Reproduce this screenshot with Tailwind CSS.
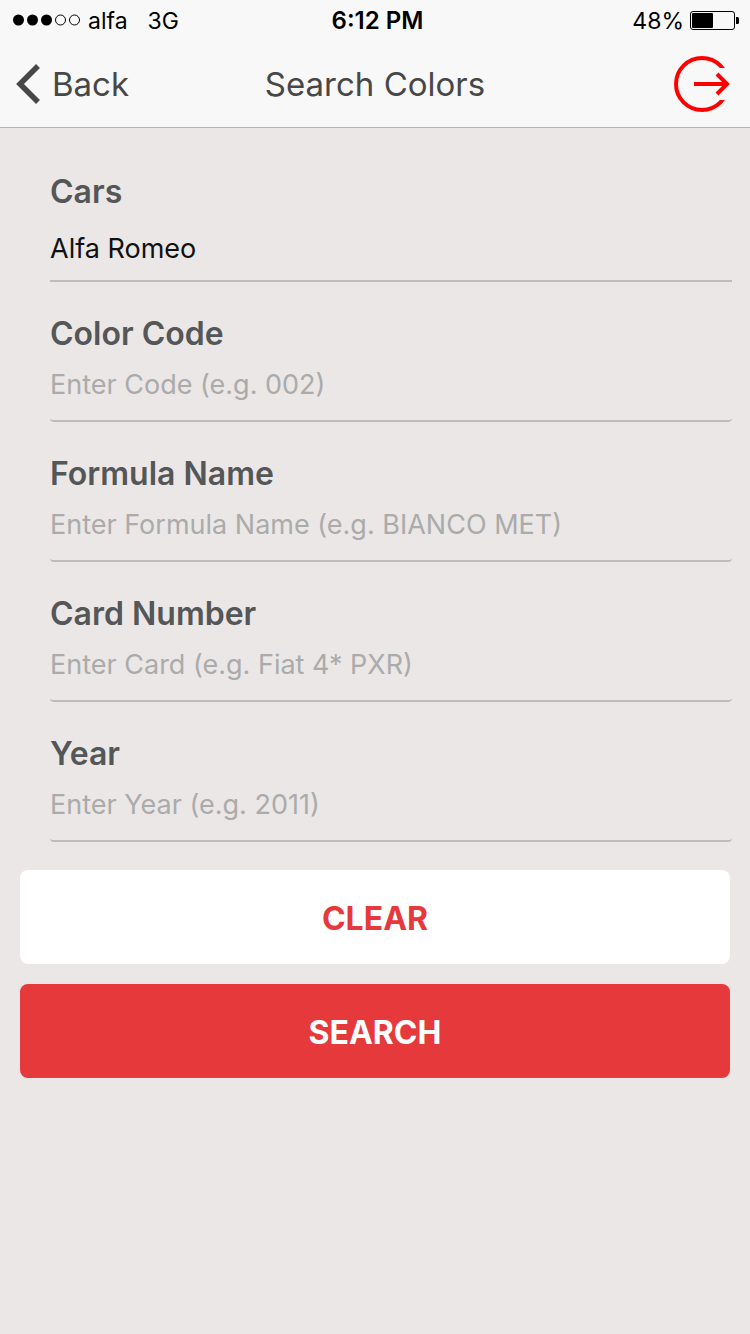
<!DOCTYPE html>
<html lang="en">
<head>
<meta charset="utf-8">
<meta name="viewport" content="width=device-width, initial-scale=1">
<title>Search Colors</title>
<script src="https://cdn.jsdelivr.net/npm/@tailwindcss/browser@4"></script>
</head>
<body class="min-h-screen bg-[#eae7e6] font-['Inter','Liberation_Sans',sans-serif] text-[#545657]">
<header class="border-b border-[#b2b2b2] bg-[#f8f8f8]">
  <div class="grid h-10 grid-cols-[1fr_auto_1fr] items-center pl-3 pr-[11px] text-[23px] text-black">
    <div class="flex items-center">
      <svg class="mr-2 h-3 w-[68px]" viewBox="0 0 68 12" aria-label="Signal strength 3 of 5">
        <circle cx="6.5" cy="6" r="5.5"/><circle cx="20.5" cy="6" r="5.5"/><circle cx="34.5" cy="6" r="5.5"/>
        <circle cx="48.5" cy="6" r="5" fill="none" stroke="black"/><circle cx="62.5" cy="6" r="5" fill="none" stroke="black"/>
      </svg>
      <span class="pt-0.5">alfa</span><span class="ml-5 pt-0.5">3G</span>
    </div>
    <span class="pl-1 pt-0.5 text-[24px] font-semibold">6:12 PM</span>
    <div class="flex items-center justify-end gap-1.5">
      <span class="pt-0.5">48%</span>
      <svg class="h-5 w-[49px]" viewBox="0 0 49 20" aria-label="Battery">
        <rect x=".5" y="1.5" width="44" height="18" rx="2.5" fill="none" stroke="black"/>
        <rect x="2" y="3" width="21" height="15" rx="1"/>
        <path d="M46 7h1.500q1.500 0 1.500 1.500v4q0 1.500-1.500 1.500H46z"/>
      </svg>
    </div>
  </div>
  <nav class="grid h-[87px] grid-cols-[1fr_auto_1fr] items-center text-[33px] text-[#474747]">
    <button type="button" class="ml-4 flex items-center gap-3 justify-self-start">
      <svg class="h-10 w-6" viewBox="0 0 24 40" fill="none" stroke="currentColor" stroke-width="5.500" aria-hidden="true"><path d="M22 2 4 20l18 18"/></svg>
      <span class="pt-0.5">Back</span>
    </button>
    <h1 class="pt-0.5">Search Colors</h1>
    <button type="button" class="mr-5 justify-self-end" aria-label="Log out">
      <svg class="h-14 w-14" viewBox="0 0 56 56" fill="none" stroke="#ff0000" stroke-width="4" aria-hidden="true">
        <clipPath id="gap"><path d="M0 0h56v12H40v32h16v12H0z"/></clipPath>
        <circle cx="28" cy="28" r="26" clip-path="url(#gap)"/>
        <path d="M20 28h33M43 18l10 10-10 10"/>
      </svg>
    </button>
  </nav>
</header>
<main class="pt-[42px]">
  <form>
    <div class="flex flex-col gap-[30px] pl-[50px] pr-[18px]">
      <div class="flex flex-col">
        <label for="cars" class="pt-px text-[32px] leading-[41px] font-semibold">Cars</label>
        <select id="cars" class="h-[70px] appearance-none border-b-2 border-[#bebbba] pt-1.5 text-[27px] text-[#111111] outline-none"><option>Alfa Romeo</option></select>
      </div>
      <div class="flex flex-col">
        <label for="code" class="pt-px text-[32px] leading-[41px] font-semibold">Color Code</label>
        <input id="code" type="text" placeholder="Enter Code (e.g. 002)" class="h-[68px] rounded-sm border-b-2 border-[#bebbba] pb-1.5 text-[27px] text-[#111111] outline-none placeholder:text-[#ababab]">
      </div>
      <div class="flex flex-col">
        <label for="formula" class="pt-px text-[32px] leading-[41px] font-semibold">Formula Name</label>
        <input id="formula" type="text" placeholder="Enter Formula Name (e.g. BIANCO MET)" class="h-[68px] rounded-sm border-b-2 border-[#bebbba] pb-1.5 text-[27px] text-[#111111] outline-none placeholder:text-[#ababab]">
      </div>
      <div class="flex flex-col">
        <label for="card" class="pt-px text-[32px] leading-[41px] font-semibold">Card Number</label>
        <input id="card" type="text" placeholder="Enter Card (e.g. Fiat 4* PXR)" class="h-[68px] rounded-sm border-b-2 border-[#bebbba] pb-1.5 text-[27px] text-[#111111] outline-none placeholder:text-[#ababab]">
      </div>
      <div class="flex flex-col">
        <label for="year" class="pt-px text-[32px] leading-[41px] font-semibold">Year</label>
        <input id="year" type="text" placeholder="Enter Year (e.g. 2011)" class="h-[68px] rounded-sm border-b-2 border-[#bebbba] pb-1.5 text-[27px] text-[#111111] outline-none placeholder:text-[#ababab]">
      </div>
    </div>
    <div class="mt-7 flex flex-col gap-5 px-5">
      <button type="reset" class="h-[94px] rounded-lg bg-white pt-1 text-[32px] font-bold text-[#e6393c]">CLEAR</button>
      <button type="button" class="h-[94px] rounded-lg bg-[#e6393c] pt-1 text-[32px] font-bold text-white">SEARCH</button>
    </div>
  </form>
</main>
</body>
</html>
